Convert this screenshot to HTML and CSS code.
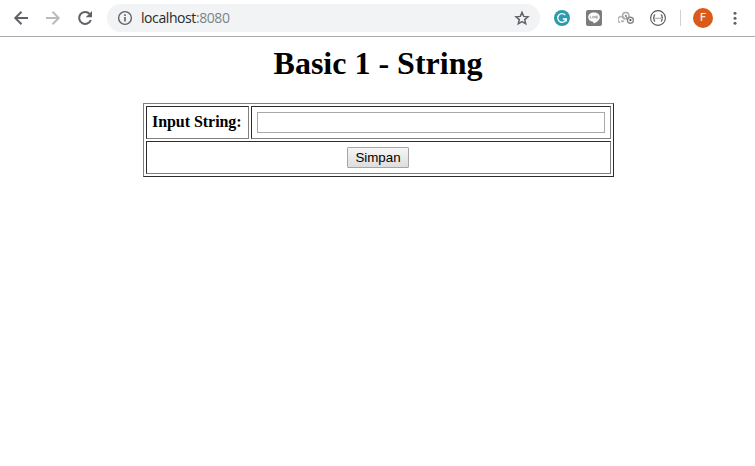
FILE: index.html
```
<!DOCTYPE html>
<html lang="id">
<head>
<meta charset="utf-8">
<title>Basic 1 - String</title>
<link rel="stylesheet" href="styles.css">
</head>
<body>
<header class="toolbar">
  <nav class="nav">
    <svg class="icon" viewBox="0 0 20 20"><path d="M17 10H4.5M10.5 3.8L4.3 10l6.2 6.2" fill="none" stroke="#5f6368" stroke-width="2"/></svg>
    <svg class="icon" viewBox="0 0 20 20"><path d="M3 10h12.5M9.5 3.8l6.2 6.2-6.2 6.2" fill="none" stroke="#b9bbbe" stroke-width="2"/></svg>
    <svg class="icon" viewBox="0 0 20 20"><path d="M14.6 5.9A6 6 0 1 0 15.8 12" fill="none" stroke="#5f6368" stroke-width="2.1"/><path d="M17 3v6.3h-6.3z" fill="#5f6368"/></svg>
  </nav>
  <div class="address">
    <svg class="info" viewBox="0 0 16 16"><circle cx="8" cy="8" r="6.4" fill="none" stroke="#5f6368" stroke-width="1.4"/><path d="M8 7v4.6M8 4.3v1.6" stroke="#5f6368" stroke-width="1.6"/></svg>
    <span class="url">localhost<span class="port">:8080</span></span>
    <svg class="star" viewBox="0 0 16 16"><path d="M8 2.4l1.7 4 4.3.4-3.3 2.8 1 4.2L8 11.6l-3.7 2.2 1-4.2L2 6.8l4.3-.4z" fill="none" stroke="#5f6368" stroke-width="1.5"/></svg>
  </div>
  <div class="extensions">
    <svg class="ext" viewBox="0 0 16 16"><circle cx="8" cy="8" r="8" fill="#2c9cad"/><path d="M11.3 5.1A4.3 4.3 0 1 0 12.2 9H8.8M12.2 8.6v2.8" fill="none" stroke="#fff" stroke-width="1.4"/></svg>
    <svg class="ext" viewBox="0 0 16 16"><rect width="16" height="16" rx="2" fill="#7c7c7c"/><path d="M8 2.6c-3.3 0-5.8 2-5.8 4.6 0 2.3 2 4.1 4.8 4.5.7.1.6.7.5 1.9 3.2-1.4 6.3-3.8 6.3-6.4 0-2.6-2.5-4.6-5.8-4.6z" fill="#fff"/><path d="M4.3 5.8v2.4h1.3M6.7 5.8v2.6M7.9 8.4V5.9l1.5 2.3V5.8M12 6h-1.4v2.2H12M10.6 7.1h1.2" fill="none" stroke="#888" stroke-width=".6"/></svg>
    <svg class="ext" viewBox="0 0 16 16" fill="none"><path d="M2 12.6A3.2 3.2 0 1 1 6.4 9.4M3.4 10.2l.6 1.4 2.2-.6" stroke="#b0b0b0" stroke-width="1.4"/><circle cx="7.8" cy="5.7" r="3.2" stroke="#aaa" stroke-width="1.4"/><path d="M7.8 5.7l1.6 3.6" stroke="#999" stroke-width="1.2"/><circle cx="12.4" cy="10.2" r="3" stroke="#888" stroke-width="1.4"/><circle cx="12.4" cy="10.2" r="1.1" fill="#555"/><circle cx="7.8" cy="5.7" r="1" fill="#888"/></svg>
    <svg class="ext" viewBox="0 0 16 16" fill="none" stroke="#555"><circle cx="8" cy="8" r="7.4" stroke-width="1.1"/><path d="M5.2 4.9c-1.2 0-1.1.8-1.1 1.7S3.8 8 3 8c.8 0 1.1.5 1.1 1.4s-.1 1.7 1.1 1.7M10.8 4.9c1.2 0 1.1.8 1.1 1.7S12.2 8 13 8c-.8 0-1.1.5-1.1 1.4s.1 1.7-1.1 1.7" stroke-width="1.2"/><path d="M5.5 8.3h1.1M7.5 8.3h1.1M9.5 8.3h1.1" stroke-width="1.1"/></svg>
  </div>
  <span class="divider"></span>
  <span class="avatar">F</span>
  <svg class="menu" viewBox="0 0 4 16" fill="#5f6368"><circle cx="2" cy="3.3" r="1.5"/><circle cx="2" cy="8.3" r="1.5"/><circle cx="2" cy="13.3" r="1.5"/></svg>
</header>
<main>
  <h1>Basic 1 - String</h1>
  <form>
    <table class="form-table">
      <tr><th class="label">Input String:</th><td><input class="field" type="text" aria-label="Input String"></td></tr>
      <tr><td class="action" colspan="2"><button class="save" type="button">Simpan</button></td></tr>
    </table>
  </form>
</main>
</body>
</html>
```
FILE: styles.css
```
* { box-sizing: border-box; }
body { margin: 0; background: #fff; color: #000; font-family: "Liberation Serif", serif; overflow: hidden; }
svg { display: block; flex: none; }

.toolbar { display: flex; align-items: center; height: 37px; padding-left: 11px; border-bottom: 1px solid #ababab; }
.nav { display: flex; gap: 12px; }
.icon { width: 20px; height: 20px; }
.address { display: flex; align-items: center; width: 433px; height: 28px; margin-left: 12px; padding: 0 10px; border-radius: 14px; background: #f1f3f4; }
.info { width: 16px; height: 16px; }
.url { margin-left: 8px; font: 14px/20px "Open Sans", sans-serif; letter-spacing: -0.42px; color: #27292c; }
.port { color: #7c8388; }
.star { width: 16px; height: 16px; margin-left: auto; }
.extensions { display: flex; gap: 16px; margin-left: 14px; }
.ext { width: 16px; height: 16px; }
.divider { width: 1px; height: 16px; margin-left: 14px; background: #d6d0c8; }
.avatar { width: 20px; height: 20px; margin-left: 12px; border-radius: 50%; background: #da5a1a; color: #fbe6da; font: 500 11px/20px Roboto, sans-serif; text-align: center; }
.menu { width: 4px; height: 16px; margin-left: 20px; }

h1 { margin: 8px 0 21px; padding-left: 1px; font-size: 32px; line-height: 37px; text-align: center; }
.form-table { width: 471px; height: 74px; margin: 0 auto 0 143px; border: 1px solid; border-color: #808080 #2c2c2c #2c2c2c #808080; border-collapse: separate; border-spacing: 2px; table-layout: fixed; }
.form-table th, .form-table td { height: 33px; padding: 5px; border: 1px solid; border-color: #2c2c2c #808080 #808080 #2c2c2c; line-height: 18px; }
.form-table .label { width: 103px; padding-top: 4px; font-size: 16px; letter-spacing: -0.05px; text-align: left; white-space: nowrap; }
.field { display: block; width: 348px; height: 21px; margin: 0; padding: 1px; border: 1px solid #a9a9a9; background: #fff; }
.form-table .action { padding-right: 6px; }
.save { display: block; width: 62px; height: 21px; margin: 0 auto; padding: 0; border: 1px solid #a6a6a6; border-radius: 1px; background: linear-gradient(#f6f6f6, #dddddd); color: #000; font: 13.33px/19px "Liberation Sans", sans-serif; }
```
